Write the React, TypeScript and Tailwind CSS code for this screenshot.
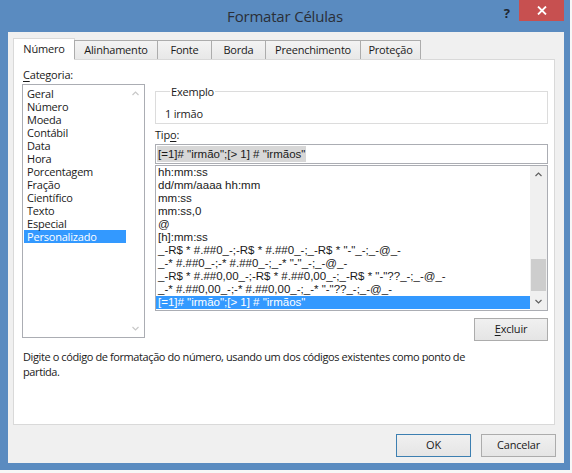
import React from "react";

function Chevron({ dir, color }: { dir: "up" | "down"; color: string }) {
  return (
    <svg width="7" height="5" viewBox="0 0 7 5">
      <polyline
        points={dir === "up" ? "0.5,4 3.5,1 6.5,4" : "0.5,1 3.5,4 6.5,1"}
        fill="none"
        stroke={color}
        strokeWidth="1.2"
      />
    </svg>
  );
}

const categories = [
  "Geral",
  "Número",
  "Moeda",
  "Contábil",
  "Data",
  "Hora",
  "Porcentagem",
  "Fração",
  "Científico",
  "Texto",
  "Especial",
  "Personalizado",
];

const formats = [
  "hh:mm:ss",
  "dd/mm/aaaa hh:mm",
  "mm:ss",
  "mm:ss,0",
  "@",
  "[h]:mm:ss",
  '_-R$ * #.##0_-;-R$ * #.##0_-;_-R$ * "-"_-;_-@_-',
  '_-* #.##0_-;-* #.##0_-;_-* "-"_-;_-@_-',
  '_-R$ * #.##0,00_-;-R$ * #.##0,00_-;_-R$ * "-"??_-;_-@_-',
  '_-* #.##0,00_-;-* #.##0,00_-;_-* "-"??_-;_-@_-',
  '[=1]# "irmão";[> 1] # "irmãos"',
];

const tabs = [
  { label: "Número", w: "w-[62px]", active: true },
  { label: "Alinhamento", w: "w-[84px]", active: false },
  { label: "Fonte", w: "w-[55px]", active: false },
  { label: "Borda", w: "w-[55px]", active: false },
  { label: "Preenchimento", w: "w-[96px]", active: false },
  { label: "Proteção", w: "w-[61px]", active: false },
];

export default function App() {
  return (
    <div className="w-[572px] h-[473px] bg-[#f7f7f7] overflow-hidden font-['Open_Sans',sans-serif] text-[11px] text-[#1a1a1a]">
      <div className="w-[570px] h-[470px] bg-[#5a8bc0] flex flex-col">
        {/* Title bar */}
        <div className="h-[32px] grid grid-cols-[1fr_auto_1fr]">
          <div />
          <div className="text-[15px] leading-[32px] text-[#2a2f38] tracking-[-0.2px]">
            Formatar Células
          </div>
          <div className="flex justify-end items-start pr-[6px]">
            <div className="mt-[5px] mr-[9px] text-[13px] font-bold leading-[16px] text-[#1e2630]">
              ?
            </div>
            <div className="w-[45px] h-[21px] bg-[#c75050] flex items-center justify-center">
              <svg width="10" height="9" viewBox="0 0 10 9">
                <path d="M1 0.5 L9 8.5 M9 0.5 L1 8.5" stroke="#ffffff" strokeWidth="1.8" />
              </svg>
            </div>
          </div>
        </div>

        {/* Client area */}
        <div className="ml-[8px] mr-[6px] h-[431px] bg-[#f0f0f0] flex flex-col">
          {/* Tabs */}
          <div className="mt-[6px] pl-[5px] h-[22px] flex items-end -mb-px relative z-10">
            {tabs.map((t, i) =>
              t.active ? (
                <div
                  key={t.label}
                  className={`${t.w} h-[22px] bg-white border border-b-0 border-[#d9d9d9] flex items-center justify-center pb-[1px] tracking-[-0.2px]`}
                >
                  {t.label}
                </div>
              ) : (
                <div
                  key={t.label}
                  className={`${t.w} h-[19px] mb-[1px] ${i > 0 ? "-ml-px" : ""} bg-linear-to-b from-[#f3f3f3] to-[#e8e8e8] border border-b-0 border-[#acacac] flex items-center justify-center tracking-[-0.2px]`}
                >
                  {t.label}
                </div>
              )
            )}
          </div>

          {/* Panel */}
          <div className="ml-[5px] w-[542px] h-[366px] bg-white border border-[#d9d9d9] pl-[8px] pt-[7px] tracking-[-0.2px]">
            <div className="flex">
              {/* Left column */}
              <div className="w-[123px]">
                <div className="h-[17px] leading-[15px] pl-[1px]">
                  <span className="underline underline-offset-2">C</span>ategoria:
                </div>
                <div className="h-[254px] border border-[#abadb3] bg-white flex">
                  <div className="flex-1 pt-[2px] pl-[1px]">
                    {categories.map((c) => (
                      <div
                        key={c}
                        className={`h-[13px] leading-[13px] pl-[3px] mr-[1px] ${
                          c === "Personalizado" ? "bg-[#3399ff] text-white" : ""
                        }`}
                      >
                        {c}
                      </div>
                    ))}
                  </div>
                  <div className="w-[17px] flex flex-col justify-between items-center py-[6px]">
                    <Chevron dir="up" color="#c8c8c8" />
                    <Chevron dir="down" color="#c8c8c8" />
                  </div>
                </div>
              </div>

              {/* Right column */}
              <div className="ml-[10px] w-[393px] pt-[17px]">
                <fieldset className="h-[40px] border border-[#dcdcdc] pl-[9px]">
                  <legend className="ml-[5px] px-[1px] leading-[15px]">Exemplo</legend>
                  <div className="leading-[15px] mt-[7px]">1 irmão</div>
                </fieldset>
                <div className="mt-[3px] h-[17px] leading-[15px]">
                  Tip<span className="underline underline-offset-2">o</span>:
                </div>
                <div className="h-[20px] border border-[#abadb3] bg-white flex items-center pl-[1px]">
                  <span className="bg-[#d7d7d7] h-[16px] leading-[16px] px-[1px] font-['Liberation_Sans',sans-serif] text-[11.5px] tracking-normal">
                    [=1]# "irmão";[&gt; 1] # "irmãos"
                  </span>
                </div>
                <div className="mt-[1px] h-[146px] border border-[#abadb3] bg-white flex font-['Liberation_Sans',sans-serif] text-[11.5px] tracking-normal">
                  <div className="flex-1 overflow-hidden whitespace-nowrap">
                    {formats.map((f, i) => (
                      <div
                        key={i}
                        className={`h-[13px] leading-[13px] pl-[2px] ${
                          i === formats.length - 1 ? "bg-[#3399ff] text-white" : ""
                        }`}
                      >
                        {f}
                      </div>
                    ))}
                  </div>
                  <div className="w-[17px] bg-[#f0f0f0] flex flex-col items-center">
                    <div className="h-[17px] flex items-center justify-center">
                      <Chevron dir="up" color="#606060" />
                    </div>
                    <div className="flex-1 w-full flex flex-col justify-end pb-[2px]">
                      <div className="h-[32px] mx-[1px] bg-[#cdcdcd]" />
                    </div>
                    <div className="h-[17px] flex items-center justify-center">
                      <Chevron dir="down" color="#606060" />
                    </div>
                  </div>
                </div>
                <div className="mt-[7px] flex justify-end">
                  <div className="w-[74px] h-[23px] border border-[#acacac] bg-linear-to-b from-[#f0f0f0] to-[#e5e5e5] flex items-center justify-center">
                    <span>
                      <span className="underline underline-offset-2">E</span>xcluir
                    </span>
                  </div>
                </div>
              </div>
            </div>
            <div className="mt-[8px] leading-[15px] pl-[1px] tracking-[-0.4px]">
              Digite o código de formatação do número, usando um dos códigos existentes como ponto de
              <br />
              partida.
            </div>
          </div>

          {/* Buttons */}
          <div className="mt-[9px] flex justify-end gap-[10px] pr-[8px] tracking-[-0.2px]">
            <div className="w-[75px] h-[23px] border border-[#3c7fb1] bg-linear-to-b from-[#f0f0f0] to-[#e5e5e5] flex items-center justify-center">
              OK
            </div>
            <div className="w-[75px] h-[23px] border border-[#acacac] bg-linear-to-b from-[#f0f0f0] to-[#e5e5e5] flex items-center justify-center">
              Cancelar
            </div>
          </div>
        </div>
      </div>
    </div>
  );
}
